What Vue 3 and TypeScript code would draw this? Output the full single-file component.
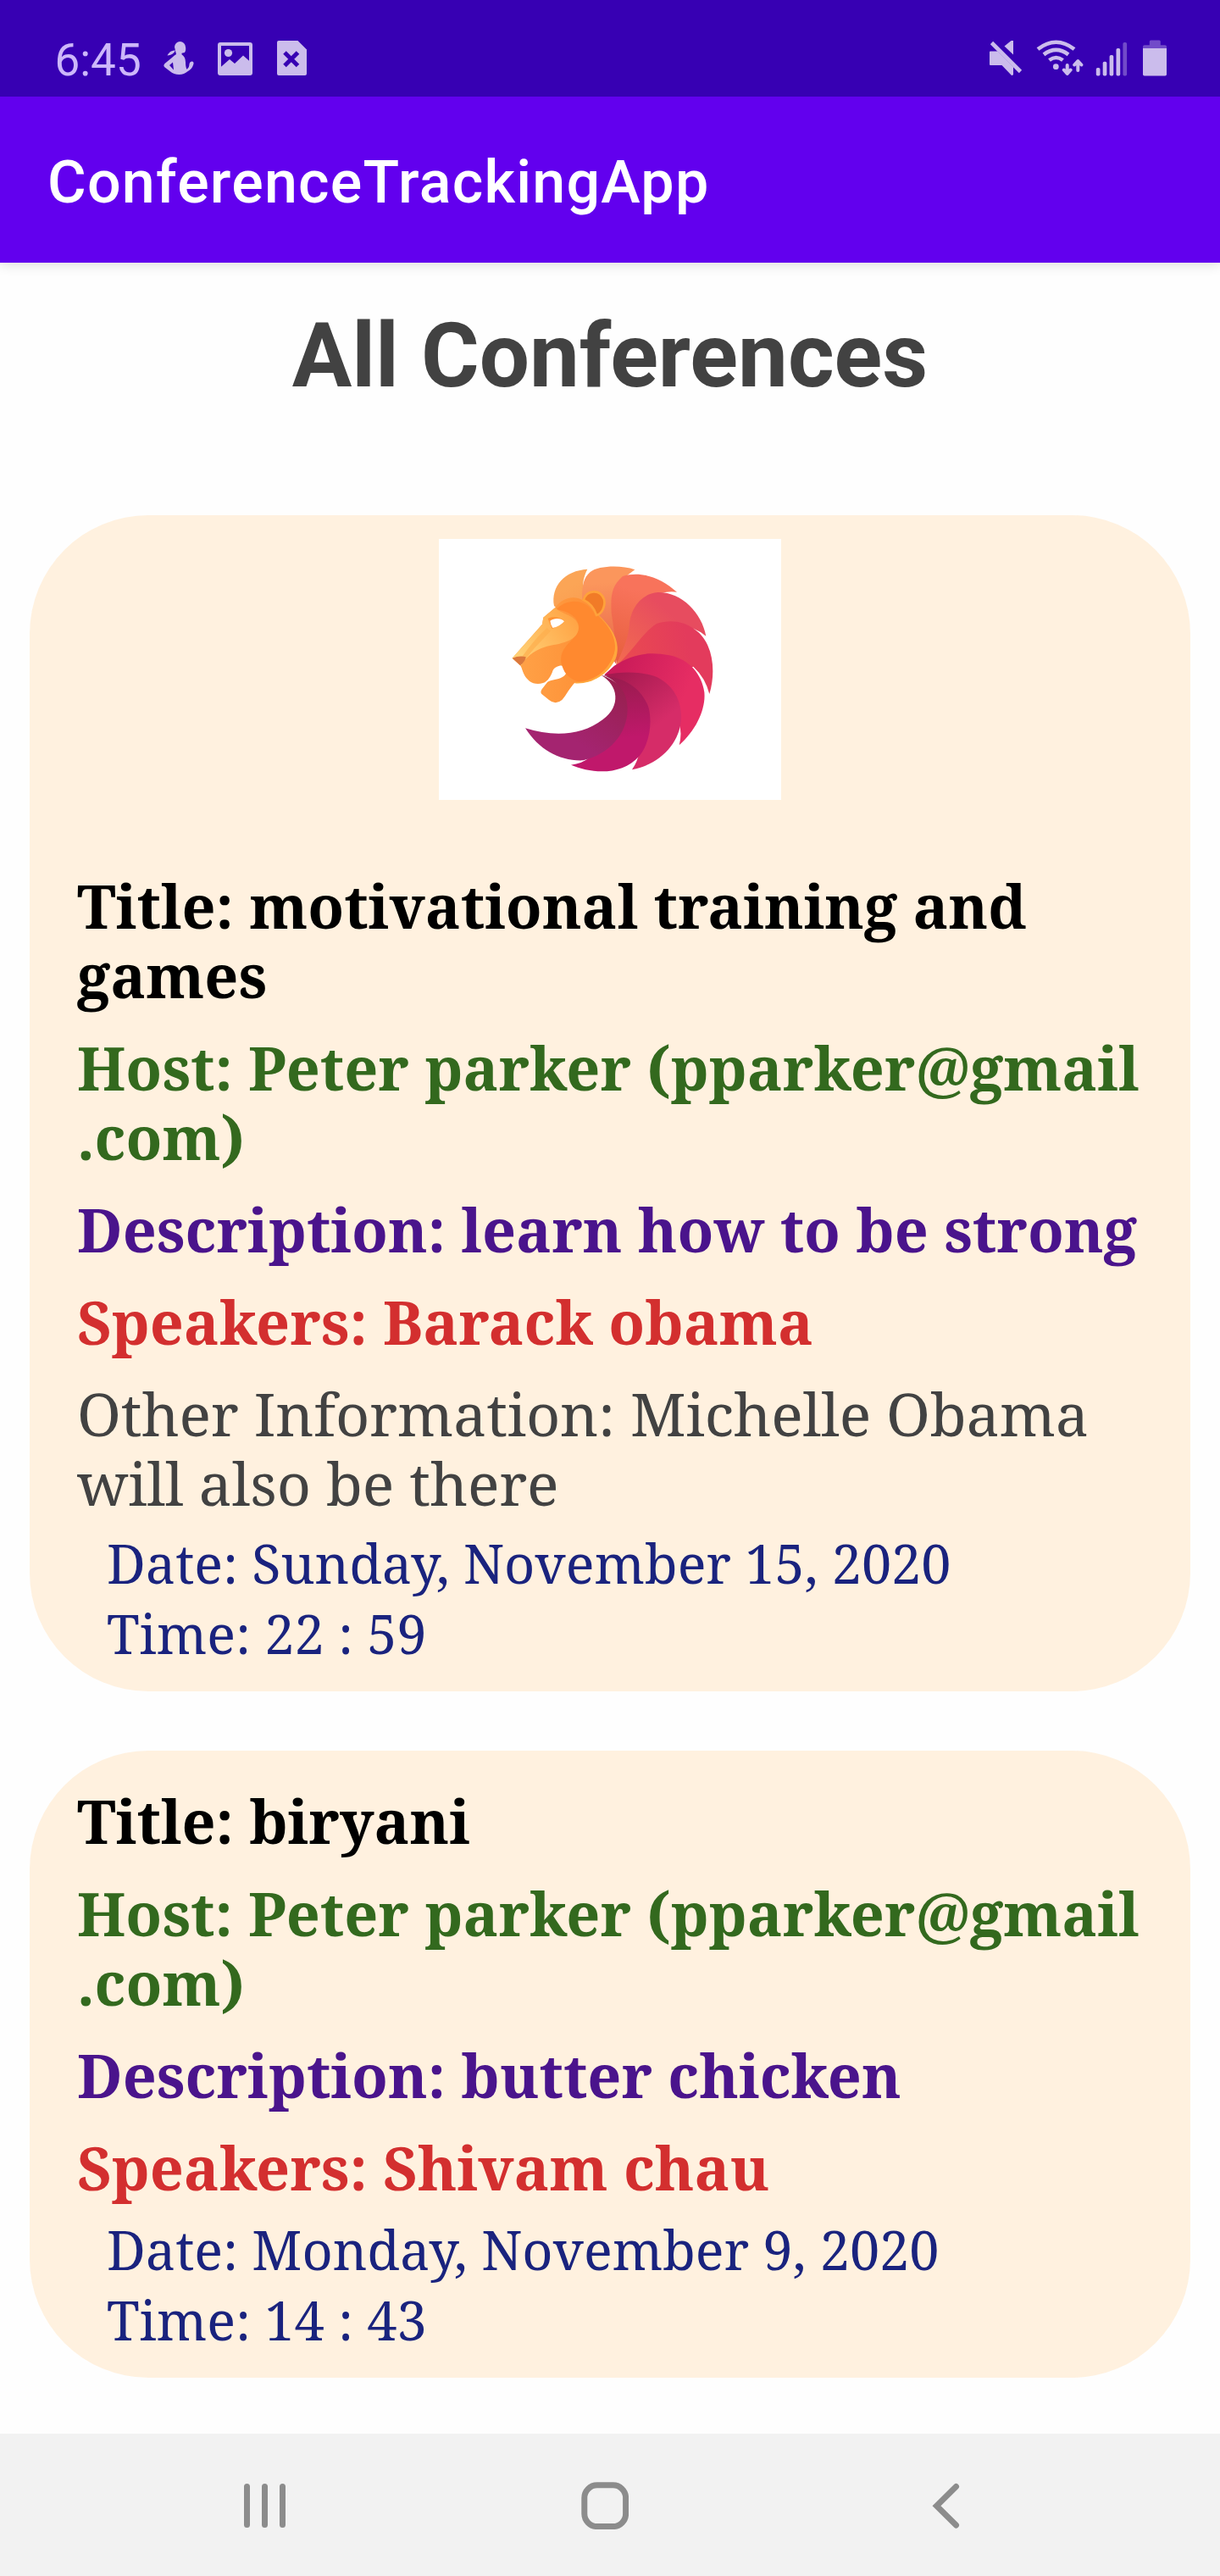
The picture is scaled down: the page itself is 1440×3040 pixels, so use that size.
<script setup lang="ts">
interface Field {
  kind: 'title' | 'host' | 'description' | 'speakers' | 'other'
  lines: string[]
}

interface Conference {
  id: number
  hasImage: boolean
  fields: Field[]
  schedule: string[]
}

interface Feather {
  d: string
  x: number
  y: number
  inner: string
  outer: string
}

const hostField: Field = { kind: 'host', lines: ['Host: Peter parker (pparker@gmail', '.com)'] }

const conferences: Conference[] = [
  {
    id: 1,
    hasImage: true,
    fields: [
      { kind: 'title', lines: ['Title: motivational training and', 'games'] },
      hostField,
      { kind: 'description', lines: ['Description: learn how to be strong'] },
      { kind: 'speakers', lines: ['Speakers: Barack obama'] },
      { kind: 'other', lines: ['Other Information: Michelle Obama', 'will also be there'] },
    ],
    schedule: ['Date: Sunday, November 15, 2020', 'Time: 22 : 59'],
  },
  {
    id: 2,
    hasImage: false,
    fields: [
      { kind: 'title', lines: ['Title: biryani'] },
      hostField,
      { kind: 'description', lines: ['Description: butter chicken'] },
      { kind: 'speakers', lines: ['Speakers: Shivam chau'] },
    ],
    schedule: ['Date: Monday, November 9, 2020', 'Time: 14 : 43'],
  },
]

// Mane feathers, painted clockwise so that each one overlaps the previous.
const feathers: Feather[] = [
  { d: 'M580 155C500 160 450 215 462 285L500 320L590 290C555 240 560 195 580 155Z', x: 500, y: 160, inner: '#f98d45', outer: '#fba556' },
  { d: 'M748 157C700 140 620 142 590 165C560 190 560 230 562 280L680 490L735 300L720 178Z', x: 640, y: 150, inner: '#e9654b', outer: '#fb965c' },
  { d: 'M897 236C840 185 770 160 705 180C665 215 662 250 665 310C675 380 685 430 682 495L760 340L840 240Q870 232 897 236Z', x: 760, y: 180, inner: '#e8603f', outer: '#f8735b' },
  { d: 'M1000 392C985 310 915 236 830 237C765 242 730 300 728 360C722 410 700 450 682 495L900 430L955 365Q980 375 1000 392Z', x: 890, y: 260, inner: '#f26a50', outer: '#e74c5f' },
  { d: 'M1012 597C1038 510 1022 412 962 370C925 338 870 332 825 348C780 375 745 440 682 497L890 540L955 500Q998 540 1012 597Z', x: 990, y: 430, inner: '#ea4a50', outer: '#e33b5c' },
  { d: 'M905 778C965 725 1000 650 994 590C985 530 945 475 870 460C790 443 735 460 675 497L640 529L830 620L900 680Q918 730 905 778Z', x: 970, y: 620, inner: '#cc1c5a', outer: '#e62d63' },
  { d: 'M738 865C840 845 905 770 912 690C917 620 880 560 820 535C760 515 700 518 640 529C700 540 740 600 750 660L765 800Q758 835 738 865Z', x: 860, y: 740, inner: '#a51a50', outer: '#d62c68' },
  { d: 'M522 848C590 877 700 890 765 815C808 760 808 680 795 640C765 565 700 538 632 530C690 545 715 600 715 660L590 820Q560 845 522 848Z', x: 700, y: 800, inner: '#981c4d', outer: '#c0186b' },
  { d: 'M360 718C410 795 480 835 565 832C655 810 722 740 722 650C722 590 690 550 628 530C690 565 700 640 635 687C560 745 460 750 360 718Z', x: 480, y: 790, inner: '#98204f', outer: '#a42470' },
]

const signalBars = [80, 72.7, 65, 57, 50]
</script>

<template>
  <div class="screen">
    <header class="status">
      <div class="status-left">
        <span class="clock">6:45</span>
        <svg class="person" width="36" height="42" viewBox="193 48 36 42">
          <path fill-rule="evenodd" d="M206 55.5a6.5 6.5 0 0 1 13 0q.8 4-1 6.5l-3.5.8v1.500q4.500 3 4.500 9t1.500 8.500q3-2 3-6.500 1-3.500 3.500-2.800t1 4.300q-1.500 5-6.500 7.500-4 3.700-10 3.700-6.500 0-11-4l-6.500-5q-1.500-2 .5-4l8.500-7q2.500-2.500 5-4zM200 77l5 5.500-1-9z" />
          <path d="M207 59.500q-3-.5-6 1.500-3 3-3.500 4.500 7-.5 9.500-6z" />
        </svg>
        <svg class="picture" width="42" height="40" viewBox="257 50 42 40">
          <rect x="259" y="52" width="37" height="35" rx="1" fill="none" stroke="#cbbcec" stroke-width="4" />
          <circle cx="269.500" cy="62.500" r="4.600" />
          <path d="M259 80.500L271 70l6 5 10-9.500 9 8V87h-37z" />
        </svg>
        <svg class="file" width="36" height="42" viewBox="327 48 36 42">
          <path d="M329 48h22.500L362 58.500V87q0 2-2 2h-31q-2 0-2-2V50q0-2 2-2z" />
          <path d="M336 62l15.500 15.500M351.500 62L336 77.500" stroke="#3700b3" stroke-width="5" />
        </svg>
      </div>
      <svg class="status-right" width="212" height="46" viewBox="1167 46 212 46">
        <path d="M1169 60.500h8.500l18.500 18.500V88q-.5 1-2 1L1182.500 77h-13.500q-1 0-1-1V61.500q0-1 1-1zM1196 48v16.500l-10.500-10 8-6.500z" />
        <path class="line" d="M1170.500 50.500l34 34" />
        <path class="line" d="M1225 58Q1246.500 41.500 1268 58M1232 64.300Q1246.500 53.500 1261 64.300M1238.500 71Q1246.500 65 1254.500 71" />
        <circle cx="1246.300" cy="78.700" r="3.400" />
        <path class="line thin" d="M1259.700 77v9.500M1255.800 82.500l3.900 4.500 3.900-4.500M1272.300 83V72.500M1268.200 76.500l4.100-4.500 4.100 4.500" />
        <rect v-for="(top, i) in signalBars" :key="top" :x="1293.800 + i * 7.900" :y="top" width="4.700" :height="89.600 - top" rx="1.800" :opacity="i === 4 ? 0.4 : 1" />
        <path opacity=".4" d="M1349 57v-2q0-1.800 1.800-1.800h6V49q0-1.500 1.500-1.500h10q1.500 0 1.500 1.500v4.200h5.400q1.800 0 1.800 1.800v2z" />
        <path d="M1349 57h28v30.800q0 1.800-1.800 1.800h-24.400q-1.800 0-1.800-1.800z" />
      </svg>
    </header>

    <div class="app-bar">
      <span class="app-title">ConferenceTrackingApp</span>
    </div>

    <main class="content">
      <h1 class="heading">All Conferences</h1>

      <section v-for="conf in conferences" :key="conf.id" class="card" :class="{ pictured: conf.hasImage }">
        <svg v-if="conf.hasImage" class="lion" width="404" height="308" viewBox="54 48 1212 924">
          <defs>
            <linearGradient v-for="(f, i) in feathers" :id="`feather-${i}`" :key="i" gradientUnits="userSpaceOnUse" x1="670" y1="500" :x2="f.x" :y2="f.y">
              <stop offset=".1" :stop-color="f.inner" />
              <stop offset=".85" :stop-color="f.outer" />
            </linearGradient>
            <linearGradient id="mask" x1="0" y1=".8" x2="1" y2=".2">
              <stop offset="0" stop-color="#ffd378" />
              <stop offset="1" stop-color="#ffa243" />
            </linearGradient>
            <linearGradient id="muzzle" x1="0" y1="0" x2="1" y2="0">
              <stop offset="0" stop-color="#ffa348" />
              <stop offset="1" stop-color="#fd8a31" />
            </linearGradient>
          </defs>
          <rect x="54" y="48" width="1212" height="924" fill="#fff" />
          <path v-for="(f, i) in feathers" :key="i" :d="f.d" :fill="`url(#feather-${i})`" />
          <path fill="#ffa83c" d="M600 300C665 355 702 410 680 472C652 532 590 564 535 559L520 440Z" />
          <path fill="url(#muzzle)" d="M314 470L420 350L424 326L467 290C500 245 560 240 600 300C665 360 692 410 670 465C647 525 590 557 538 555C520 570 505 602 490 618Q467 638 444 618L418 597Q412 590 419 580L439 554C455 546 475 547 490 538C505 530 512 515 505 503C492 490 465 498 457 515C452 532 440 552 423 558C390 568 368 550 357 530C348 513 348 503 342 496Z" />
          <path fill="#ff892f" d="M487 485C480 420 545 410 550 360C548 325 515 305 470 298C500 262 565 255 600 305C662 360 692 415 670 465C645 522 595 552 545 552C510 540 495 520 487 485Z" />
          <path fill="url(#mask)" d="M314 470L420 350L424 326L467 290C480 315 548 315 549 362C547 400 510 415 450 425C405 435 370 455 345 496Z" />
          <path fill="#fdae4d" opacity=".7" d="M345 470C370 435 405 390 437 363L450 374C425 400 385 440 360 475Z" />
          <path fill="#ff9232" d="M440 330C455 320 485 325 498 338L490 350L455 366Q448 350 440 330Z" />
          <path fill="#fff" d="M448 338C463 327 487 328 498 340Q482 359 457 363Q449 350 448 338Z" />
          <path fill="#db783c" d="M314 470Q340 460 362 466Q361 482 342 496Z" />
          <path fill="#f17b27" stroke="#ffa23a" stroke-width="8" d="M566 264C578 228 625 224 639 262C645 290 628 315 612 318C603 290 588 274 566 264Z" />
        </svg>

        <p v-for="field in conf.fields" :key="field.kind" class="field" :class="field.kind">
          <span v-for="line in field.lines" :key="line" class="row">{{ line }}</span>
        </p>
        <p class="schedule">
          <span v-for="line in conf.schedule" :key="line" class="row">{{ line }}</span>
        </p>
      </section>
    </main>

    <nav class="nav">
      <svg width="50" height="56" viewBox="288 2929 50 56">
        <path d="M291.500 2934.500v45M312.500 2934.500v45M333.500 2934.500v45" />
      </svg>
      <svg class="home" width="56" height="56" viewBox="686 2929 56 56">
        <rect x="689.800" y="2932.800" width="48.800" height="48.800" rx="15" />
      </svg>
      <svg width="34" height="56" viewBox="1100 2929 34 56">
        <path d="M1128.500 2934.500L1105.500 2957.300l23 22.700" />
      </svg>
    </nav>
  </div>
</template>

<style scoped>
.screen {
  display: flex;
  flex-direction: column;
  width: 1440px;
  height: 3040px;
  overflow: hidden;
  background: #fefefe;
  font-family: Roboto, sans-serif;
}

.status {
  position: relative;
  z-index: 2;
  display: flex;
  justify-content: space-between;
  flex: none;
  box-sizing: border-box;
  height: 114px;
  padding: 41px 61px 0 64.5px;
  background: #3700b3;
  fill: #cbbcec;
}

.status svg {
  display: block;
  flex: none;
}

.status-left {
  display: flex;
  align-items: flex-start;
}

.clock {
  flex: none;
  width: 102px;
  font-size: 53px;
  line-height: 61px;
  color: #cdb7fa;
  white-space: nowrap;
}

.person {
  margin: 7px 0 0 26.5px;
}

.picture {
  margin: 9px 0 0 28px;
}

.file {
  margin: 7px 0 0 28px;
}

.status-right {
  margin-top: 5px;
}

.line {
  fill: none;
  stroke: #cbbcec;
  stroke-width: 4.6;
  stroke-linejoin: round;
}

.thin {
  stroke-width: 4;
  stroke-linecap: round;
}

.app-bar {
  position: relative;
  z-index: 1;
  flex: none;
  box-sizing: border-box;
  height: 196px;
  padding: 60px 0 0 56px;
  background: #6200ee;
  box-shadow: 0 2px 14px rgba(0, 0, 0, 0.14);
}

.app-title {
  display: block;
  font-size: 70px;
  font-weight: 500;
  line-height: 82px;
  letter-spacing: 1.22px;
  color: #fff;
  white-space: nowrap;
}

.content {
  display: flex;
  flex-direction: column;
  flex: 1;
  gap: 70px;
  padding: 49px 35px 0;
}

.heading {
  margin: 0 0 55px;
  font-size: 105px;
  font-weight: 700;
  line-height: 124px;
  text-align: center;
  color: #424242;
  white-space: nowrap;
}

.card {
  display: flex;
  flex-direction: column;
  align-items: flex-start;
  box-sizing: border-box;
  padding: 42px 56px 27px;
  border-radius: 140px;
  background: #fff1df;
  font-family: 'Noto Serif', 'DejaVu Serif Condensed', serif;
}

.pictured {
  padding-top: 28px;
}

.lion {
  display: block;
  align-self: center;
  margin-bottom: 84px;
}

.field {
  display: flex;
  flex-direction: column;
  margin: 0 0 27px;
  font-size: 70px;
  font-weight: 700;
  line-height: 82px;
  letter-spacing: 0.04px;
}

.row {
  white-space: nowrap;
}

.title {
  color: #000;
}

.host {
  color: #33691e;
}

.description {
  color: #4a148c;
}

.speakers {
  margin-bottom: 26px;
  color: #d32f2f;
}

.other {
  margin-bottom: 12px;
  font-weight: 400;
  letter-spacing: -0.16px;
  color: #424242;
}

.speakers:nth-last-child(2) {
  margin-bottom: 14px;
}

.schedule {
  display: flex;
  flex-direction: column;
  margin: 0 0 0 35px;
  font-size: 63px;
  line-height: 83px;
  letter-spacing: -0.03px;
  color: #1a237e;
}

.nav {
  display: flex;
  flex: none;
  box-sizing: border-box;
  height: 168px;
  padding: 57px 0 0 288px;
  background: #f2f2f2;
}

.nav svg {
  display: block;
  fill: none;
  stroke: #8c8c8c;
  stroke-width: 7;
  stroke-linecap: round;
}

.nav .home {
  margin: 0 358px 0 348px;
}
</style>

<style>
body {
  margin: 0;
}
</style>
